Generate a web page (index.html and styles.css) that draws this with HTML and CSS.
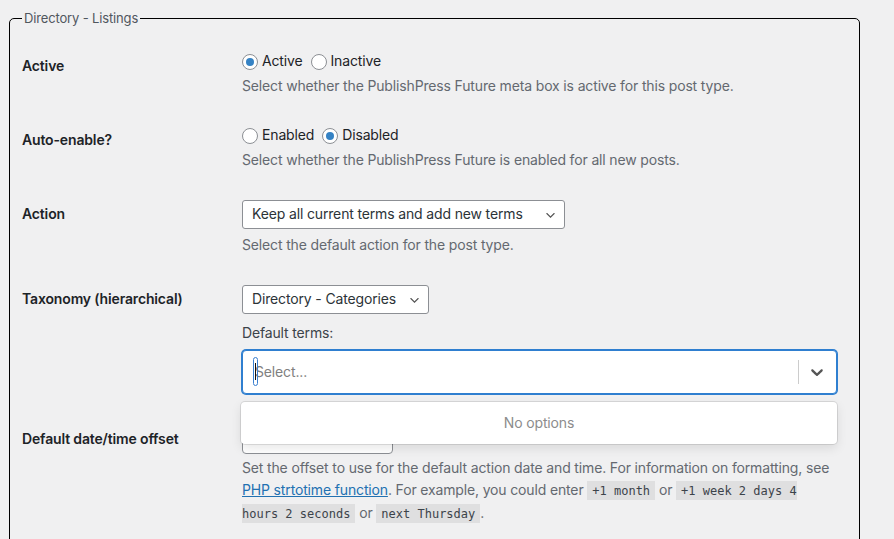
FILE: index.html
```html
<!DOCTYPE html>
<html lang="en">
<head>
<meta charset="utf-8">
<title>PublishPress Future – Post Types</title>
<link rel="stylesheet" href="styles.css">
</head>
<body>
<fieldset class="pt-box">
  <legend class="pt-legend">Directory - Listings</legend>

  <div class="row">
    <div class="row-label">Active</div>
    <div class="row-field">
      <div class="radios">
        <label class="radio"><input type="radio" name="active" checked> Active</label>
        <label class="radio"><input type="radio" name="active"> Inactive</label>
      </div>
      <p class="description">Select whether the PublishPress Future meta box is active for this post type.</p>
    </div>
  </div>

  <div class="row">
    <div class="row-label">Auto-enable?</div>
    <div class="row-field">
      <div class="radios">
        <label class="radio"><input type="radio" name="auto"> Enabled</label>
        <label class="radio"><input type="radio" name="auto" checked> Disabled</label>
      </div>
      <p class="description">Select whether the PublishPress Future is enabled for all new posts.</p>
    </div>
  </div>

  <div class="row">
    <div class="row-label">Action</div>
    <div class="row-field">
      <select class="wp-select wp-select-action">
        <option>Keep all current terms and add new terms</option>
      </select>
      <p class="description">Select the default action for the post type.</p>
    </div>
  </div>

  <div class="row">
    <div class="row-label">Taxonomy (hierarchical)</div>
    <div class="row-field row-field-terms">
      <select class="wp-select wp-select-tax">
        <option>Directory - Categories</option>
      </select>
      <p class="terms-label">Default terms:</p>
      <div class="rs">
        <div class="rs-control">
          <div class="rs-value">
            <span class="rs-placeholder">Select...</span>
            <span class="rs-input"><span class="rs-caret"></span></span>
          </div>
          <div class="rs-indicators">
            <span class="rs-sep"></span>
            <span class="rs-dropdown">
              <svg viewBox="0 0 20 20" width="20" height="20" aria-hidden="true"><path d="M4.516 7.548c0.436-0.446 1.043-0.481 1.576 0l3.908 3.747 3.908-3.747c0.533-0.481 1.141-0.446 1.574 0 0.436 0.445 0.408 1.197 0 1.615-0.406 0.418-4.695 4.502-4.695 4.502-0.217 0.223-0.502 0.335-0.787 0.335s-0.57-0.112-0.789-0.335c0 0-4.287-4.084-4.695-4.502s-0.436-1.170 0-1.615z"/></svg>
            </span>
          </div>
        </div>
        <div class="rs-menu">
          <div class="rs-empty">No options</div>
        </div>
      </div>
    </div>
  </div>

  <div class="row">
    <div class="row-label">Default date/time offset</div>
    <div class="row-field">
      <input type="text" class="wp-input" value="">
      <p class="description offset-help">Set the offset to use for the default action date and time. For information on formatting, see <a href="#">PHP strtotime function</a>. For example, you could enter <code>+1 month</code> or <code>+1 week 2 days 4 hours 2 seconds</code> or <code>next Thursday</code>.</p>
    </div>
  </div>
</fieldset>
</body>
</html>
```

FILE: styles.css
```css
html, body {
  margin: 0;
  padding: 0;
  background: #f0f0f1;
}

body {
  font-family: Inter, "Liberation Sans", Arial, sans-serif;
  font-size: 14px;
  letter-spacing: -0.15px;
  color: #1d2327;
  line-height: 1.3;
}

/* Post type settings box */
.pt-box {
  box-sizing: border-box;
  width: 851px;
  margin: 10px 0 0 9px;
  padding: 11px 12px 16px 12px;
  border: 1px solid #000;
  border-radius: 5px;
  min-width: 0;
}

.pt-legend {
  font-size: 13px;
  line-height: 16px;
  color: #50575e;
  padding: 0 2px;
}

/* One setting row: label column + field column */
.row {
  display: grid;
  grid-template-columns: 210px 1fr;
}

.row-label {
  padding: 20px 10px 20px 0;
  font-weight: 600;
  line-height: 1.3;
}

.row-field {
  padding: 15px 10px;
  min-width: 0;
}

.row-field-terms {
  padding-bottom: 16px;
}

.radios {
  display: flex;
  gap: 8px;
  align-items: center;
  height: 19px;
}

.radio {
  display: inline-flex;
  align-items: center;
  gap: 4px;
}

.radio input {
  appearance: none;
  -webkit-appearance: none;
  box-sizing: border-box;
  width: 16px;
  height: 16px;
  margin: 0;
  border: 1px solid #8c8f94;
  border-radius: 50%;
  background: #fff;
  display: grid;
  place-items: center;
}

.radio input:checked::before {
  content: "";
  width: 8px;
  height: 8px;
  border-radius: 50%;
  background: #3582c4;
}

.description {
  margin: 4px 0 0;
  line-height: 21px;
  color: #646970;
}

/* Native-looking WP select */
.wp-select {
  appearance: none;
  -webkit-appearance: none;
  font: inherit;
  letter-spacing: inherit;
  color: #2c3338;
  height: 29px;
  margin: 0 0 3px;
  padding: 0 24px 0 9px;
  border: 1px solid #8c8f94;
  border-radius: 3px;
  background: #fff url("data:image/svg+xml;charset=US-ASCII,%3Csvg%20width%3D%2220%22%20height%3D%2220%22%20xmlns%3D%22http%3A%2F%2Fwww.w3.org%2F2000%2Fsvg%22%3E%3Cpath%20d%3D%22M5%206l5%205%205-5%202%201-7%207-7-7%202-1z%22%20fill%3D%22%23555%22%2F%3E%3C%2Fsvg%3E") no-repeat right 7px top 55%;
  background-size: 13px 13px;
  display: block;
}

.wp-select-action {
  width: 323px;
  margin-bottom: 5px;
}

.wp-select-tax {
  width: 187px;
}

.terms-label {
  margin: 10px 0 8px;
  line-height: 18px;
  color: #3c434a;
}

/* Default terms picker */
.rs {
  position: relative;
}

.rs-control {
  box-sizing: border-box;
  height: 44px;
  display: flex;
  align-items: center;
  background: #fff;
  border: 1px solid #2f7fd0;
  box-shadow: 0 0 0 1px #2f7fd0;
  border-radius: 4px;
}

.rs-value {
  flex: 1;
  display: flex;
  align-items: center;
  padding: 0 9px;
  position: relative;
  height: 100%;
}

.rs-placeholder {
  color: #808080;
  margin-left: 3px;
}

.rs-input {
  position: absolute;
  left: 10px;
  top: 6px;
  width: 3px;
  height: 27px;
  border: 1.5px solid #3a7fd0;
  border-radius: 3px;
  display: flex;
  justify-content: center;
  align-items: center;
}

.rs-caret {
  width: 1.5px;
  height: 17px;
  background: #111;
}

.rs-indicators {
  display: flex;
  align-items: center;
  align-self: stretch;
}

.rs-sep {
  width: 1px;
  align-self: stretch;
  margin: 9px 0;
  background: #ccc;
}

.rs-dropdown {
  display: flex;
  padding: 8px 9px 8px 8px;
  fill: #555;
}

.rs-dropdown svg {
  width: 20px;
  height: 20px;
}

.rs-menu {
  position: absolute;
  left: -1px;
  right: 0;
  top: 52px;
  z-index: 2;
  background: #fff;
  border-radius: 4px;
  padding: 4px 0;
  box-shadow: 0 0 0 1px rgba(0, 0, 0, 0.1), 0 4px 11px rgba(0, 0, 0, 0.1);
}

.rs-empty {
  padding: 8px 12px;
  text-align: center;
  color: #8c8c8c;
  line-height: 18px;
}

/* Offset text input */
.wp-input {
  box-sizing: border-box;
  display: block;
  width: 151px;
  height: 29px;
  margin: 0;
  padding: 0 8px;
  font: inherit;
  border: 1px solid #8c8f94;
  border-radius: 4px;
  background: #fff;
}

.offset-help {
  margin-top: 3px;
  line-height: 22px;
}

.offset-help a {
  color: #2271b1;
  text-decoration: underline;
}

.offset-help code {
  font-family: "DejaVu Sans Mono", "Liberation Mono", monospace;
  font-size: 12px;
  letter-spacing: 0;
  color: #3c434a;
  background: rgba(0, 0, 0, 0.07);
  padding: 3px 5px 2px;
}
```
